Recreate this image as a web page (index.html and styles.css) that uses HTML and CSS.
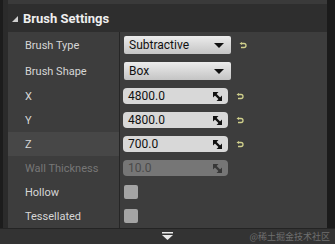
FILE: index.html
```html
<!DOCTYPE html>
<html lang="en">
<head>
  <meta charset="UTF-8" />
  <title>Brush Settings</title>
  <link rel="stylesheet" href="styles.css">
</head>
<body>
  <div class="frame">
    <div class="rail"></div>
    <div class="panel">
      <div class="header">
        <span class="caret"></span>
        <span class="title">Brush Settings</span>
      </div>

      <div class="row row-tall">
        <div class="label">Brush Type</div>
        <div class="value">
          <div class="combo">Subtractive <span class="arrow"></span></div>
          <svg class="reset" width="8" height="7" viewBox="0 0 8 7"><path d="M2.5 1.5 H5 Q7 1.5 7 3.5 Q7 5.5 5 5.5 H2" fill="none" stroke="#d0d08c" stroke-width="1.3"/><path d="M0.5 1.5 L3 0 V3 Z" fill="#d0d08c"/></svg>
        </div>
      </div>

      <div class="row row-tall">
        <div class="label">Brush Shape</div>
        <div class="value">
          <div class="combo">Box <span class="arrow"></span></div>
        </div>
      </div>

      <div class="row">
        <div class="label">X</div>
        <div class="value">
          <div class="num">4800.0 <svg class="spin" width="9" height="9" viewBox="0 0 9 9"><path d="M0 0 H5.5 L0 5.5 Z M9 9 H3.5 L9 3.5 Z" fill="#111"/><path d="M1 1 L8 8" stroke="#111" stroke-width="2.4"/></svg></div>
          <svg class="reset" width="8" height="7" viewBox="0 0 8 7"><path d="M2.5 1.5 H5 Q7 1.5 7 3.5 Q7 5.5 5 5.5 H2" fill="none" stroke="#d0d08c" stroke-width="1.3"/><path d="M0.5 1.5 L3 0 V3 Z" fill="#d0d08c"/></svg>
        </div>
      </div>

      <div class="row">
        <div class="label">Y</div>
        <div class="value">
          <div class="num">4800.0 <svg class="spin" width="9" height="9" viewBox="0 0 9 9"><path d="M0 0 H5.5 L0 5.5 Z M9 9 H3.5 L9 3.5 Z" fill="#111"/><path d="M1 1 L8 8" stroke="#111" stroke-width="2.4"/></svg></div>
          <svg class="reset" width="8" height="7" viewBox="0 0 8 7"><path d="M2.5 1.5 H5 Q7 1.5 7 3.5 Q7 5.5 5 5.5 H2" fill="none" stroke="#d0d08c" stroke-width="1.3"/><path d="M0.5 1.5 L3 0 V3 Z" fill="#d0d08c"/></svg>
        </div>
      </div>

      <div class="row row-hover">
        <div class="label">Z</div>
        <div class="value">
          <div class="num">700.0 <svg class="spin" width="9" height="9" viewBox="0 0 9 9"><path d="M0 0 H5.5 L0 5.5 Z M9 9 H3.5 L9 3.5 Z" fill="#111"/><path d="M1 1 L8 8" stroke="#111" stroke-width="2.4"/></svg></div>
          <svg class="reset" width="8" height="7" viewBox="0 0 8 7"><path d="M2.5 1.5 H5 Q7 1.5 7 3.5 Q7 5.5 5 5.5 H2" fill="none" stroke="#d0d08c" stroke-width="1.3"/><path d="M0.5 1.5 L3 0 V3 Z" fill="#d0d08c"/></svg>
        </div>
      </div>

      <div class="row row-disabled">
        <div class="label">Wall Thickness</div>
        <div class="value">
          <div class="num">10.0 <svg class="spin" width="9" height="9" viewBox="0 0 9 9"><path d="M0 0 H5.5 L0 5.5 Z M9 9 H3.5 L9 3.5 Z" fill="#383838"/><path d="M1 1 L8 8" stroke="#383838" stroke-width="2.4"/></svg></div>
        </div>
      </div>

      <div class="row">
        <div class="label">Hollow</div>
        <div class="value"><div class="check"></div></div>
      </div>

      <div class="row">
        <div class="label">Tessellated</div>
        <div class="value"><div class="check"></div></div>
      </div>
    </div>
    <div class="edge"></div>
  </div>

  <div class="footer">
    <svg class="more" width="11" height="8" viewBox="0 0 11 8"><rect x="0" y="0" width="11" height="1.5" fill="#e8e8e8"/><path d="M0 3 H11 L5.5 8 Z" fill="#e8e8e8"/></svg>
    <span class="mark">@稀土掘金技术社区</span>
  </div>
</body>
</html>
```

FILE: styles.css
```css
body {
  margin: 0;
  background-color: #2b2b2b;
  font-family: Roboto, "Noto Sans", sans-serif;
  width: 335px;
  height: 244px;
  overflow: hidden;
}

.frame {
  display: flex;
  height: 228px;
  border-left: 3px solid #1c1c1c;
}

.rail {
  width: 5px;
  background-color: #2b2b2b;
}

.panel {
  flex: 1;
  padding-top: 4px;
  background-color: #3a3a3a;
  display: flex;
  flex-direction: column;
}

.edge {
  width: 8px;
  background-color: #1b1b1b;
}

.header {
  height: 28px;
  background-color: #2e2e2e;
  display: flex;
  align-items: center;
  padding-left: 4px;
}

.caret {
  width: 0;
  height: 0;
  border-left: 6px solid transparent;
  border-bottom: 6px solid #cfcfcf;
  margin-right: 5px;
  margin-top: 2px;
}

.title {
  color: #eeeeee;
  font-size: 13px;
  font-weight: bold;
}

.row {
  display: flex;
  height: 24px;
  background-color: #3d3d3d;
}

.row-tall {
  height: 26px;
}

.label {
  width: 94px;
  padding-left: 17px;
  border-right: 1px solid #262626;
  color: #d6d6d6;
  font-size: 11px;
  display: flex;
  align-items: center;
}

.row-hover .label {
  background-color: #474747;
}

.value {
  flex: 1;
  display: flex;
  align-items: center;
  padding-left: 3px;
  gap: 8px;
}

.combo {
  width: 95px;
  height: 18px;
  padding-left: 5px;
  margin-left: 1px;
  border-radius: 2px;
  background: linear-gradient(#ececec, #c4c4c4);
  color: #111;
  font-size: 12px;
  display: flex;
  align-items: center;
  justify-content: space-between;
  padding-right: 7px;
}

.arrow {
  width: 0;
  height: 0;
  border-left: 5px solid transparent;
  border-right: 5px solid transparent;
  border-top: 5px solid #111;
}

.num {
  width: 94px;
  height: 16px;
  padding-left: 5px;
  padding-right: 6px;
  border-radius: 4px;
  background-color: #d8d8d8;
  color: #111;
  font-size: 12px;
  display: flex;
  align-items: center;
  justify-content: space-between;
}

.row-disabled .label {
  color: #777;
}

.row-disabled .num {
  background-color: #767676;
  color: #4a4a4a;
}

.check {
  width: 14px;
  height: 14px;
  border-radius: 2px;
  background-color: #a4a4a4;
  margin-left: 1px;
}

.footer {
  position: relative;
  height: 15px;
  border-top: 1px solid #242424;
  background-color: #333;
  display: flex;
  justify-content: center;
  padding-top: 3px;
}

.more {
  margin-left: -1px;
}

.mark {
  position: absolute;
  right: 5px;
  top: 1px;
  font-family: "Noto Sans CJK SC", sans-serif;
  font-size: 9px;
  color: #6f6f6f;
}
```
